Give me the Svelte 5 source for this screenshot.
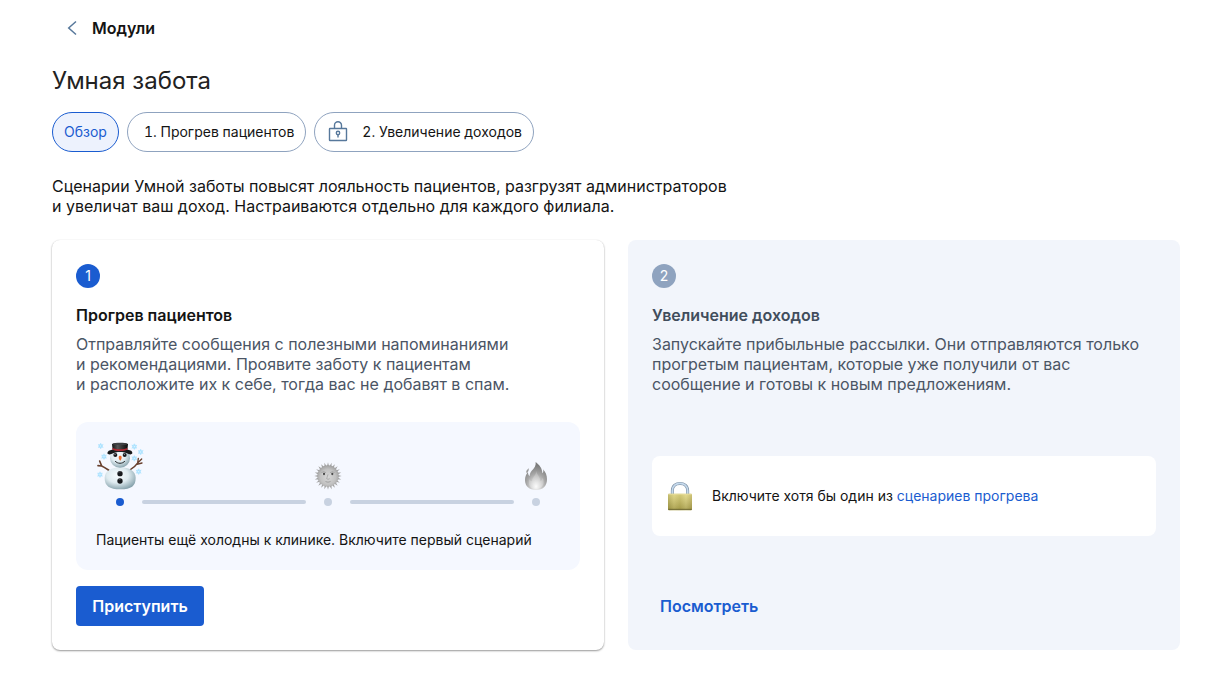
<script lang="ts">
  type Tab = { id: string; label: string; locked?: boolean };

  const tabs: Tab[] = [
    { id: "overview", label: "Обзор" },
    { id: "warmup", label: "1. Прогрев пациентов" },
    { id: "income", label: "2. Увеличение доходов", locked: true },
  ];

  let activeTab = $state("overview");

  const flakes = [[14, 12], [24, 44], [12, 98], [115, 14], [134, 30], [115, 49], [128, 89]];
  const rays = Array.from({ length: 24 }, (_, i) => i * 15);
</script>

<main class="page">
  <a class="back" href="#modules">
    <svg class="chevron" viewBox="0 0 24 24" aria-hidden="true">
      <path d="M16 5.5 8.7 12l7.3 6.5" fill="none" stroke="currentColor" stroke-width="1.5" />
    </svg>
    Модули
  </a>

  <h1>Умная забота</h1>

  <nav class="tabs">
    {#each tabs as tab}
      <button
        class="tab"
        class:active={activeTab === tab.id}
        class:locked={tab.locked}
        onclick={() => (activeTab = tab.id)}
      >
        {#if tab.locked}
          <svg class="tab-icon" viewBox="0 0 24 24" fill="none" stroke="currentColor" stroke-width="1.4" aria-hidden="true">
            <rect x="3.5" y="8.5" width="17" height="12" rx="0.5" />
            <path d="M8.5 8.5V5.3a3.5 3.5 0 0 1 7 0v3.2" />
            <circle cx="12" cy="13" r="1.7" />
            <path d="M12 14.7v2.8" />
          </svg>
        {/if}
        {tab.label}
      </button>
    {/each}
  </nav>

  <p class="intro">
    Сценарии Умной заботы повысят лояльность пациентов, разгрузят администраторов<br />
    и увеличат ваш доход. Настраиваются отдельно для каждого филиала.
  </p>

  <div class="cards">
    <section class="card raised">
      <span class="badge">1</span>
      <h2>Прогрев пациентов</h2>
      <p class="description">
        Отправляйте сообщения с полезными напоминаниями<br />
        и рекомендациями. Проявите заботу к пациентам<br />
        и расположите их к себе, тогда вас не добавят в спам.
      </p>

      <div class="progress">
        <div class="track">
          <div class="step current">
            <svg class="snowman" viewBox="0 0 144 144" aria-hidden="true">
              <defs>
                <radialGradient id="snow" cx="0.42" cy="0.36" r="0.7">
                  <stop offset="0" stop-color="#f7fcfe" />
                  <stop offset="0.5" stop-color="#dfebf0" />
                  <stop offset="1" stop-color="#7f9ca6" />
                </radialGradient>
                <linearGradient id="hat" x1="0" x2="1">
                  <stop offset="0" stop-color="#111111" />
                  <stop offset="0.35" stop-color="#555555" />
                  <stop offset="1" stop-color="#080808" />
                </linearGradient>
              </defs>
              {#each flakes as [x, y]}
                <g transform="translate({x} {y})">
                  <circle r="7" fill="#c3eaff" />
                  <path d="M0-9V9M-8-4.5 8 4.5M-8 4.5 8-4.5" fill="none" stroke="#9bdcff" stroke-width="2" />
                  <circle r="2" fill="#e9f8ff" />
                </g>
              {/each}
              <g fill="none" stroke="#68402e" stroke-linecap="round">
                <path d="M40 86C31 80 24 75 17 72M17 72 6 71M17 72 11 57" stroke-width="5" />
                <path d="M103 83C112 78 120 70 125 63M125 63l2-14M125 63l12-12M120 68l18-5" stroke-width="4" />
              </g>
              <path d="M26 108C26 87 47 76 73 76s46 11 46 32c0 24-13 34-46 34s-47-10-47-34z" fill="url(#snow)" />
              <ellipse cx="72" cy="49" rx="30" ry="28" fill="url(#snow)" />
              <path d="M34 34c0-7 7-10 14-11h48c7 1 14 4 13 11-2 4-8 4-13 1-12-7-36-7-48 0-6 3-12 3-14-1z" fill="#17181a" />
              <path d="M48 6c8-5 40-5 48 0l-2 19c-12 4-32 4-44 0z" fill="url(#hat)" />
              <path d="M49 18c13 5 33 5 46 0l-1 5c-12 5-32 5-44 0z" fill="#ad2832" />
              <ellipse cx="72" cy="6" rx="22" ry="3" fill="#3f4144" />
              <ellipse cx="58" cy="39" rx="6" ry="6" fill="#17191c" />
              <ellipse cx="86" cy="39" rx="6" ry="6" fill="#17191c" />
              <circle cx="57" cy="37" r="1.5" fill="#d9e2e6" />
              <circle cx="85" cy="37" r="1.5" fill="#d9e2e6" />
              <path d="M68 45c1-5 8-5 9 0 0 5-2 9-4 11-3-2-5-6-5-11z" fill="#ec6a2c" />
              <path d="M58 58c6 8 22 8 28 0" fill="none" stroke="#24282b" stroke-width="3" stroke-linecap="round" />
              <circle cx="72" cy="95" r="8" fill="#17191c" />
              <circle cx="72" cy="117" r="8" fill="#17191c" />
              <path d="M68 92a6 6 0 0 1 6-3M68 114a6 6 0 0 1 6-3" fill="none" stroke="#777d80" stroke-width="2" />
            </svg>
            <span class="dot"></span>
          </div>
          <span class="line"></span>
          <div class="step">
            <svg class="stage" viewBox="0 0 84 84" aria-hidden="true">
              <defs>
                <radialGradient id="sun" cx="0.5" cy="0.55" r="0.55">
                  <stop offset="0" stop-color="#d8d8d8" />
                  <stop offset="0.65" stop-color="#c2c2c2" />
                  <stop offset="1" stop-color="#a0a0a0" />
                </radialGradient>
              </defs>
              {#each rays as angle}
                <path d="M39 12 42 1l3 11z" fill="#a2a2a2" transform="rotate({angle} 42 42)" />
              {/each}
              <circle cx="42" cy="42" r="32" fill="url(#sun)" />
              <path d="M22 32q7-6 14 0M48 32q7-6 14 0M42 37l-4 13q4 4 9 0" fill="none" stroke="#999999" stroke-width="2" />
              <ellipse cx="29" cy="36" rx="6" ry="3" fill="#dedede" />
              <ellipse cx="55" cy="36" rx="6" ry="3" fill="#dedede" />
              <circle cx="30" cy="36" r="3.5" fill="#4a4a4a" />
              <circle cx="55" cy="36" r="3.5" fill="#4a4a4a" />
              <path d="M32 57q10 5 20 0-10 9-20 0z" fill="#929292" />
            </svg>
            <span class="dot"></span>
          </div>
          <span class="line"></span>
          <div class="step">
            <svg class="stage" viewBox="0 0 84 84" aria-hidden="true">
              <defs>
                <radialGradient id="fire" cx="0.5" cy="0.87" r="0.75">
                  <stop offset="0" stop-color="#fafafa" />
                  <stop offset="0.25" stop-color="#dadada" />
                  <stop offset="0.6" stop-color="#a6a6a6" />
                  <stop offset="1" stop-color="#7c7c7c" />
                </radialGradient>
              </defs>
              <path d="M41 0c10 8 20 18 20 34 3-3 4-7 2-12 8 8 12 18 12 30 0 21-13 32-33 32S9 73 9 54c0-10 3-17 9-25 0 6 1 10 5 13 0-18 20-20 18-42z" fill="url(#fire)" />
              <path d="M14 33c-4-7 3-9 6-15 1 8-1 11-6 15z" fill="#9a9a9a" />
              <path d="M42 26c2 11 13 19 13 32 4-2 6-6 7-11 8 17-1 34-20 34S18 68 22 51c2 4 4 6 8 7 0-14 14-18 12-32z" fill="#ffffff" opacity="0.22" />
            </svg>
            <span class="dot"></span>
          </div>
        </div>
        <p>Пациенты ещё холодны к клинике. Включите первый сценарий</p>
      </div>

      <button class="primary">Приступить</button>
    </section>

    <section class="card muted">
      <span class="badge">2</span>
      <h2>Увеличение доходов</h2>
      <p class="description">
        Запускайте прибыльные рассылки. Они отправляются только<br />
        прогретым пациентам, которые уже получили от вас<br />
        сообщение и готовы к новым предложениям.
      </p>

      <div class="notice-area">
        <div class="notice">
          <svg class="padlock" viewBox="0 0 96 96" aria-hidden="true">
            <defs>
              <linearGradient id="brass" x1="0" x2="1">
                <stop offset="0" stop-color="#a9a150" />
                <stop offset="0.25" stop-color="#d3c978" />
                <stop offset="0.5" stop-color="#bdb35d" />
                <stop offset="0.75" stop-color="#d8cf82" />
                <stop offset="1" stop-color="#b3a758" />
              </linearGradient>
              <linearGradient id="brass-shade" x1="0" x2="0" y1="0" y2="1">
                <stop offset="0" stop-color="#fff6b0" stop-opacity="0.35" />
                <stop offset="1" stop-color="#746b20" stop-opacity="0.4" />
              </linearGradient>
            </defs>
            <path d="M25 43V32C25 3 71 3 71 32v11" fill="none" stroke="#8094a8" stroke-width="9" />
            <path d="M25 43V32C25 3 71 3 71 32v11" fill="none" stroke="#c5d9ec" stroke-width="5" />
            <rect x="12" y="41" width="72" height="50" rx="3" fill="url(#brass)" />
            <rect x="12" y="41" width="72" height="50" rx="3" fill="url(#brass-shade)" />
            <path d="M13 43h70" stroke="#e8dea0" stroke-width="2" />
            <path d="M13 88h70" stroke="#6f6934" stroke-width="3" />
          </svg>
          <p>Включите хотя бы один из <a href="#warmup">сценариев прогрева</a></p>
        </div>
      </div>

      <button class="text-button">Посмотреть</button>
    </section>
  </div>
</main>

<style>
  :global(body) {
    margin: 0;
    background: #ffffff;
  }

  .page {
    box-sizing: border-box;
    padding: 16px 52px 32px;
    color: #141414;
    font-family: Inter, "Liberation Sans", sans-serif;
    font-size: 16px;
    line-height: 20px;
  }

  h1,
  h2,
  p {
    margin: 0;
  }

  a {
    color: #1a5cd0;
    text-decoration: none;
  }

  button {
    font: inherit;
    cursor: pointer;
  }

  svg {
    display: block;
    flex-shrink: 0;
  }

  .back {
    display: flex;
    align-items: center;
    gap: 8px;
    width: fit-content;
    margin-left: 8px;
    color: #141414;
    font-weight: 600;
    line-height: 24px;
  }

  .chevron {
    width: 24px;
    height: 24px;
    color: #57789b;
  }

  h1 {
    margin-top: 25px;
    color: #222222;
    font-size: 24px;
    font-weight: 400;
    line-height: 32px;
  }

  .tabs {
    display: flex;
    flex-wrap: wrap;
    gap: 8px;
    margin-top: 15px;
  }

  .tab {
    display: flex;
    align-items: center;
    gap: 12px;
    height: 40px;
    padding: 0 11px 0 16px;
    border: 1px solid #8fa3bf;
    border-radius: 20px;
    background: #ffffff;
    color: #141414;
    font-size: 14px;
    font-variant-numeric: tabular-nums;
  }

  .tab.locked {
    padding-left: 11px;
  }

  .tab.active {
    padding-left: 11px;
    border-color: #1a5cd0;
    background: #edf2fd;
    color: #1a5cd0;
  }

  .tab-icon {
    width: 24px;
    height: 24px;
    color: #57789b;
  }

  .intro {
    margin-top: 24px;
  }

  .cards {
    display: grid;
    grid-template-columns: 1fr 1fr;
    gap: 24px;
    margin-top: 24px;
  }

  .card {
    display: flex;
    flex-direction: column;
    align-items: flex-start;
    padding: 24px;
    border-radius: 8px;
  }

  .raised {
    box-shadow: 0 1px 2px rgba(0, 0, 0, 0.4), 0 0 1px rgba(0, 0, 0, 0.1);
  }

  .muted {
    background: #f2f5fb;
  }

  .badge {
    width: 24px;
    border-radius: 50%;
    background: #1a5cd0;
    color: #ffffff;
    font-size: 14px;
    line-height: 24px;
    text-align: center;
  }

  .muted .badge {
    background: #8fa3bf;
  }

  h2 {
    margin-top: 15px;
    font-size: 16px;
    font-weight: 600;
    line-height: 24px;
  }

  .muted h2 {
    color: #414d5c;
  }

  .description {
    margin-top: 7px;
    color: #4b5565;
  }

  .progress {
    box-sizing: border-box;
    width: 100%;
    margin-top: 28px;
    padding: 20px;
    border-radius: 12px;
    background: #f5f8ff;
    font-size: 14px;
  }

  .track {
    display: flex;
    align-items: flex-end;
    margin-bottom: 24px;
    padding: 0 2px;
  }

  .step {
    display: flex;
    flex-direction: column;
    align-items: center;
    gap: 8px;
    width: 44px;
  }

  .snowman {
    width: 48px;
    height: 48px;
  }

  .stage {
    width: 28px;
    height: 28px;
  }

  .dot {
    width: 8px;
    height: 8px;
    border-radius: 50%;
    background: #c8d2e1;
  }

  .current .dot {
    background: #1a5cd0;
  }

  .line {
    flex: 1;
    height: 4px;
    margin-bottom: 2px;
    border-radius: 2px;
    background: #c8d2e1;
  }

  .primary {
    min-width: 128px;
    height: 40px;
    margin-top: 16px;
    padding: 0 16px;
    border: none;
    border-radius: 4px;
    background: #1a5cd0;
    color: #ffffff;
    font-weight: 600;
  }

  .notice-area {
    display: flex;
    flex: 1;
    align-items: center;
    width: 100%;
    margin-top: 28px;
  }

  .notice {
    display: flex;
    flex: 1;
    align-items: center;
    gap: 16px;
    padding: 24px 12px;
    border-radius: 8px;
    background: #ffffff;
    font-size: 14px;
  }

  .padlock {
    width: 32px;
    height: 32px;
  }

  .text-button {
    height: 40px;
    margin-top: 16px;
    padding: 0 8px;
    border: none;
    background: none;
    color: #1a5cd0;
    font-weight: 600;
  }
</style>
